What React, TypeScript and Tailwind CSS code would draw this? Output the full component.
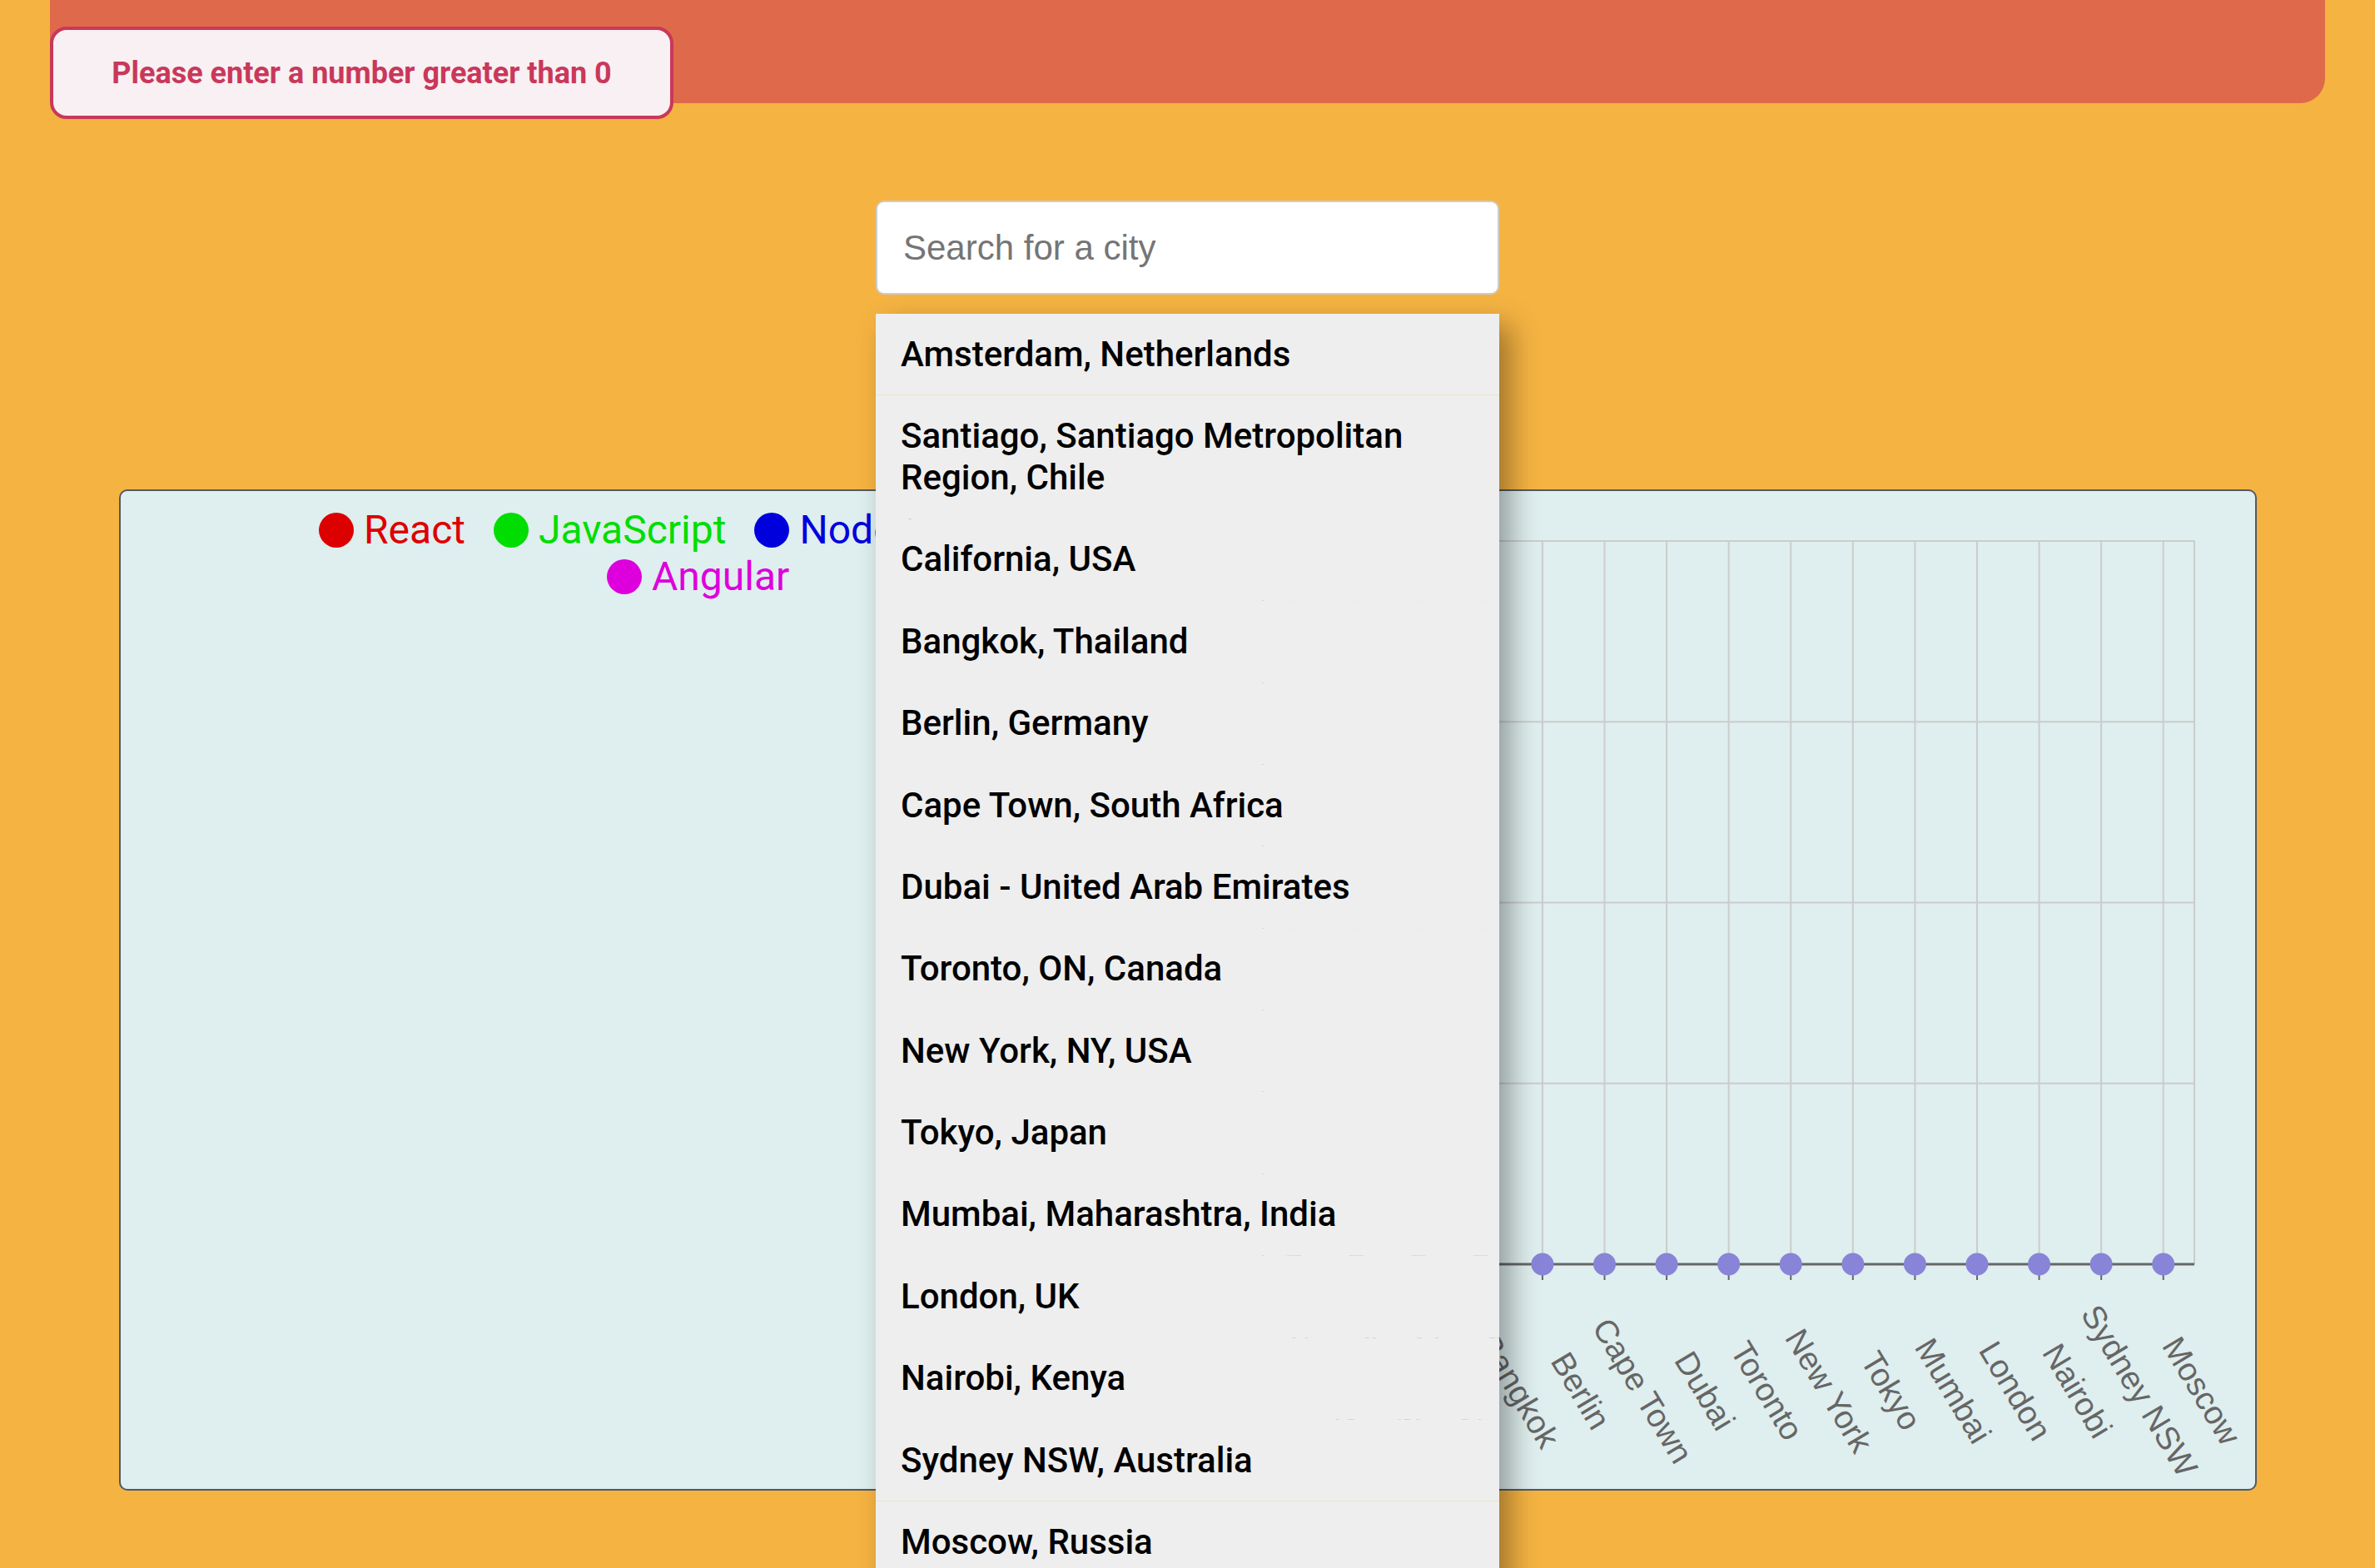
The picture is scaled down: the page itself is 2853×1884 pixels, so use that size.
const cities = [
  "Amsterdam, Netherlands",
  "Santiago, Santiago Metropolitan Region, Chile",
  "California, USA",
  "Bangkok, Thailand",
  "Berlin, Germany",
  "Cape Town, South Africa",
  "Dubai - United Arab Emirates",
  "Toronto, ON, Canada",
  "New York, NY, USA",
  "Tokyo, Japan",
  "Mumbai, Maharashtra, India",
  "London, UK",
  "Nairobi, Kenya",
  "Sydney NSW, Australia",
  "Moscow, Russia",
];

const labels = [
  "Amsterdam",
  "Santiago",
  "California",
  "Bangkok",
  "Berlin",
  "Cape Town",
  "Dubai",
  "Toronto",
  "New York",
  "Tokyo",
  "Mumbai",
  "London",
  "Nairobi",
  "Sydney NSW",
  "Moscow",
];

const legend = [
  { name: "React", color: "bg-[#dd0000]", text: "text-[#dd0000]" },
  { name: "JavaScript", color: "bg-[#00dd00]", text: "text-[#00dd00]" },
  { name: "Node.js", color: "bg-[#0000dd]", text: "text-[#0000dd]" },
];

function LegendItem({ name, color, text }: { name: string; color: string; text: string }) {
  return (
    <div className="flex items-center gap-[12px]">
      <span className={`w-[42px] h-[42px] rounded-full ${color}`} />
      <span className={text}>{name}</span>
    </div>
  );
}

function CityChart() {
  // plot area, in svg coords
  const left = 117.3;
  const right = 1236;
  const top = 60;
  const axisY = 929;
  const band = (right - left) / labels.length;
  const ticks = labels.map((_, i) => left + band / 2 + i * band);
  const rows = [60, 277.3, 494.5, 711.8];

  return (
    <svg width={1309} height={1199} viewBox="0 0 1309 1199" className="block shrink-0">
      {rows.map((y) => (
        <line key={y} x1={left} x2={right} y1={y} y2={y} stroke="#cccccc" strokeWidth={2} />
      ))}
      {ticks.map((x) => (
        <line key={x} x1={x} x2={x} y1={top} y2={axisY} stroke="#cccccc" strokeWidth={2} />
      ))}
      <line x1={right} x2={right} y1={top} y2={axisY} stroke="#cccccc" strokeWidth={2} />

      {/* y axis sits under the dropdown */}
      <line x1={left} x2={left} y1={top} y2={axisY} stroke="#666666" strokeWidth={2} />

      <line x1={left} x2={right} y1={axisY} y2={axisY} stroke="#666666" strokeWidth={3} />
      {ticks.map((x) => (
        <line key={x} x1={x} x2={x} y1={axisY} y2={axisY + 19} stroke="#666666" strokeWidth={2} />
      ))}
      {ticks.map((x) => (
        <circle key={x} cx={x} cy={axisY} r={13.5} fill="#8884d8" />
      ))}

      {labels.map((name, i) => {
        const cx = ticks[i] + 46;
        const cy = 1081;
        return (
          <text
            key={name}
            x={cx}
            y={cy}
            transform={`rotate(59 ${cx} ${cy})`}
            textAnchor="middle"
            dominantBaseline="central"
            fontSize={39}
            fill="#666666"
            fontFamily="'Liberation Sans', Arial, sans-serif"
          >
            {name}
          </text>
        );
      })}
    </svg>
  );
}

export default function App() {
  return (
    <div className="relative h-[1884px] overflow-hidden bg-[#f5b342] font-['Roboto',sans-serif]">
      {/* top bar */}
      <div className="mx-[60px] h-[124px] rounded-b-[30px] bg-[#de6a4b]" />

      {/* toast */}
      <div className="absolute left-[60px] top-[32px] flex h-[111px] w-[749px] items-center justify-center rounded-[20px] border-4 border-[#c9385a] bg-[#f8f0f3] text-[36px] font-bold text-[#c9385a]">
        Please enter a number greater than 0
      </div>

      {/* search */}
      <div className="relative z-10 mx-auto mt-[117px] w-[749px]">
        <input
          type="text"
          placeholder="Search for a city"
          className="block h-[113px] w-full rounded-[10px] border-2 border-[#cccccc] bg-white pl-[31px] font-['Liberation_Sans',Arial,sans-serif] text-[42px] text-black outline-none placeholder:text-[#757575]"
        />
        <ul className="absolute left-0 top-[136px] flex w-full flex-col gap-px bg-[#eeeeee]/80 shadow-[14px_14px_32px_rgba(0,0,0,0.35)]">
          {cities.map((c) => (
            <li
              key={c}
              className="bg-[#eeeeee] px-[30px] py-[23.7px] text-[42px] font-medium leading-[50px] text-black"
            >
              {c}
            </li>
          ))}
        </ul>
      </div>

      {/* chart card */}
      <div className="ml-[143px] mr-[142px] mt-[234px] flex h-[1203px] rounded-[10px] border-2 border-[#505a62] bg-[#dfeeee]">
        <div className="w-[1255px] shrink-0 pt-[19px] text-[48px] leading-[56px]">
          <div className="flex gap-[34px] pl-[238px]">
            {legend.map((l) => (
              <LegendItem key={l.name} {...l} />
            ))}
          </div>
          <div className="flex pl-[584px]">
            <LegendItem name="Angular" color="bg-[#dd00dd]" text="text-[#dd00dd]" />
          </div>
        </div>
        <CityChart />
      </div>
    </div>
  );
}
